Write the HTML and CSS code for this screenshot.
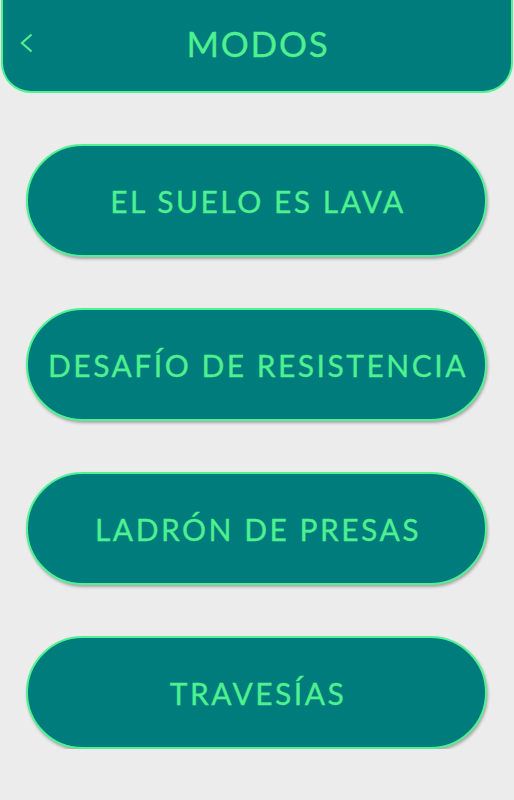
FILE: index.html
```html
<!DOCTYPE html>
<html lang="es">
<head>
<meta charset="utf-8">
<title>Modos</title>
<link rel="stylesheet" href="styles.css">
</head>
<body>
<header class="topbar">
  <button class="back" aria-label="Atrás">
    <svg width="14" height="20" viewBox="0 0 14 20"><path d="M12.5 1.5 L3 10 L12.5 18.5" fill="none" stroke="#4ff08f" stroke-width="2.2"/></svg>
  </button>
  <h1 class="title">MODOS</h1>
</header>
<main class="modes">
  <button class="mode">EL SUELO ES LAVA</button>
  <button class="mode">DESAFÍO DE RESISTENCIA</button>
  <button class="mode">LADRÓN DE PRESAS</button>
  <button class="mode">TRAVESÍAS</button>
</main>
</body>
</html>
```
FILE: styles.css
```css
html, body {
  margin: 0;
  padding: 0;
  background: #ececec;
  font-family: Lato, "Open Sans", sans-serif;
}
.topbar {
  position: relative;
  height: 91px;
  margin: 0 1px;
  background: #007c7c;
  border: 2px solid #52f294;
  border-top: none;
  border-radius: 0 0 30px 30px;
  display: flex;
  align-items: center;
  justify-content: center;
}
.back {
  position: absolute;
  left: 16px;
  top: 33px;
  background: none;
  border: none;
  padding: 0;
  width: 14px;
  height: 20px;
  display: flex;
}
.title {
  margin: 0;
  margin-top: -6px;
  padding-left: 2px;
  color: #4ff08f;
  font-family: Lato, sans-serif;
  font-weight: 400;
  font-size: 35px;
  letter-spacing: 1.8px;
  -webkit-text-stroke: 0.3px #4ff08f;
}
.modes {
  display: flex;
  flex-direction: column;
  gap: 51px;
  padding: 51px 27px 0 26px;
}
.mode {
  height: 113px;
  background: #007c7c;
  border: 2px solid #52f294;
  border-radius: 57px;
  color: #4ff08f;
  font-family: Lato, "Open Sans", sans-serif;
  font-size: 30px;
  font-weight: 400;
  letter-spacing: 2.5px;
  -webkit-text-stroke: 0.3px #4ff08f;
  box-shadow: 1px 2px 3px rgba(0,0,0,0.3);
  padding: 0 0 0 3px;
}
```
